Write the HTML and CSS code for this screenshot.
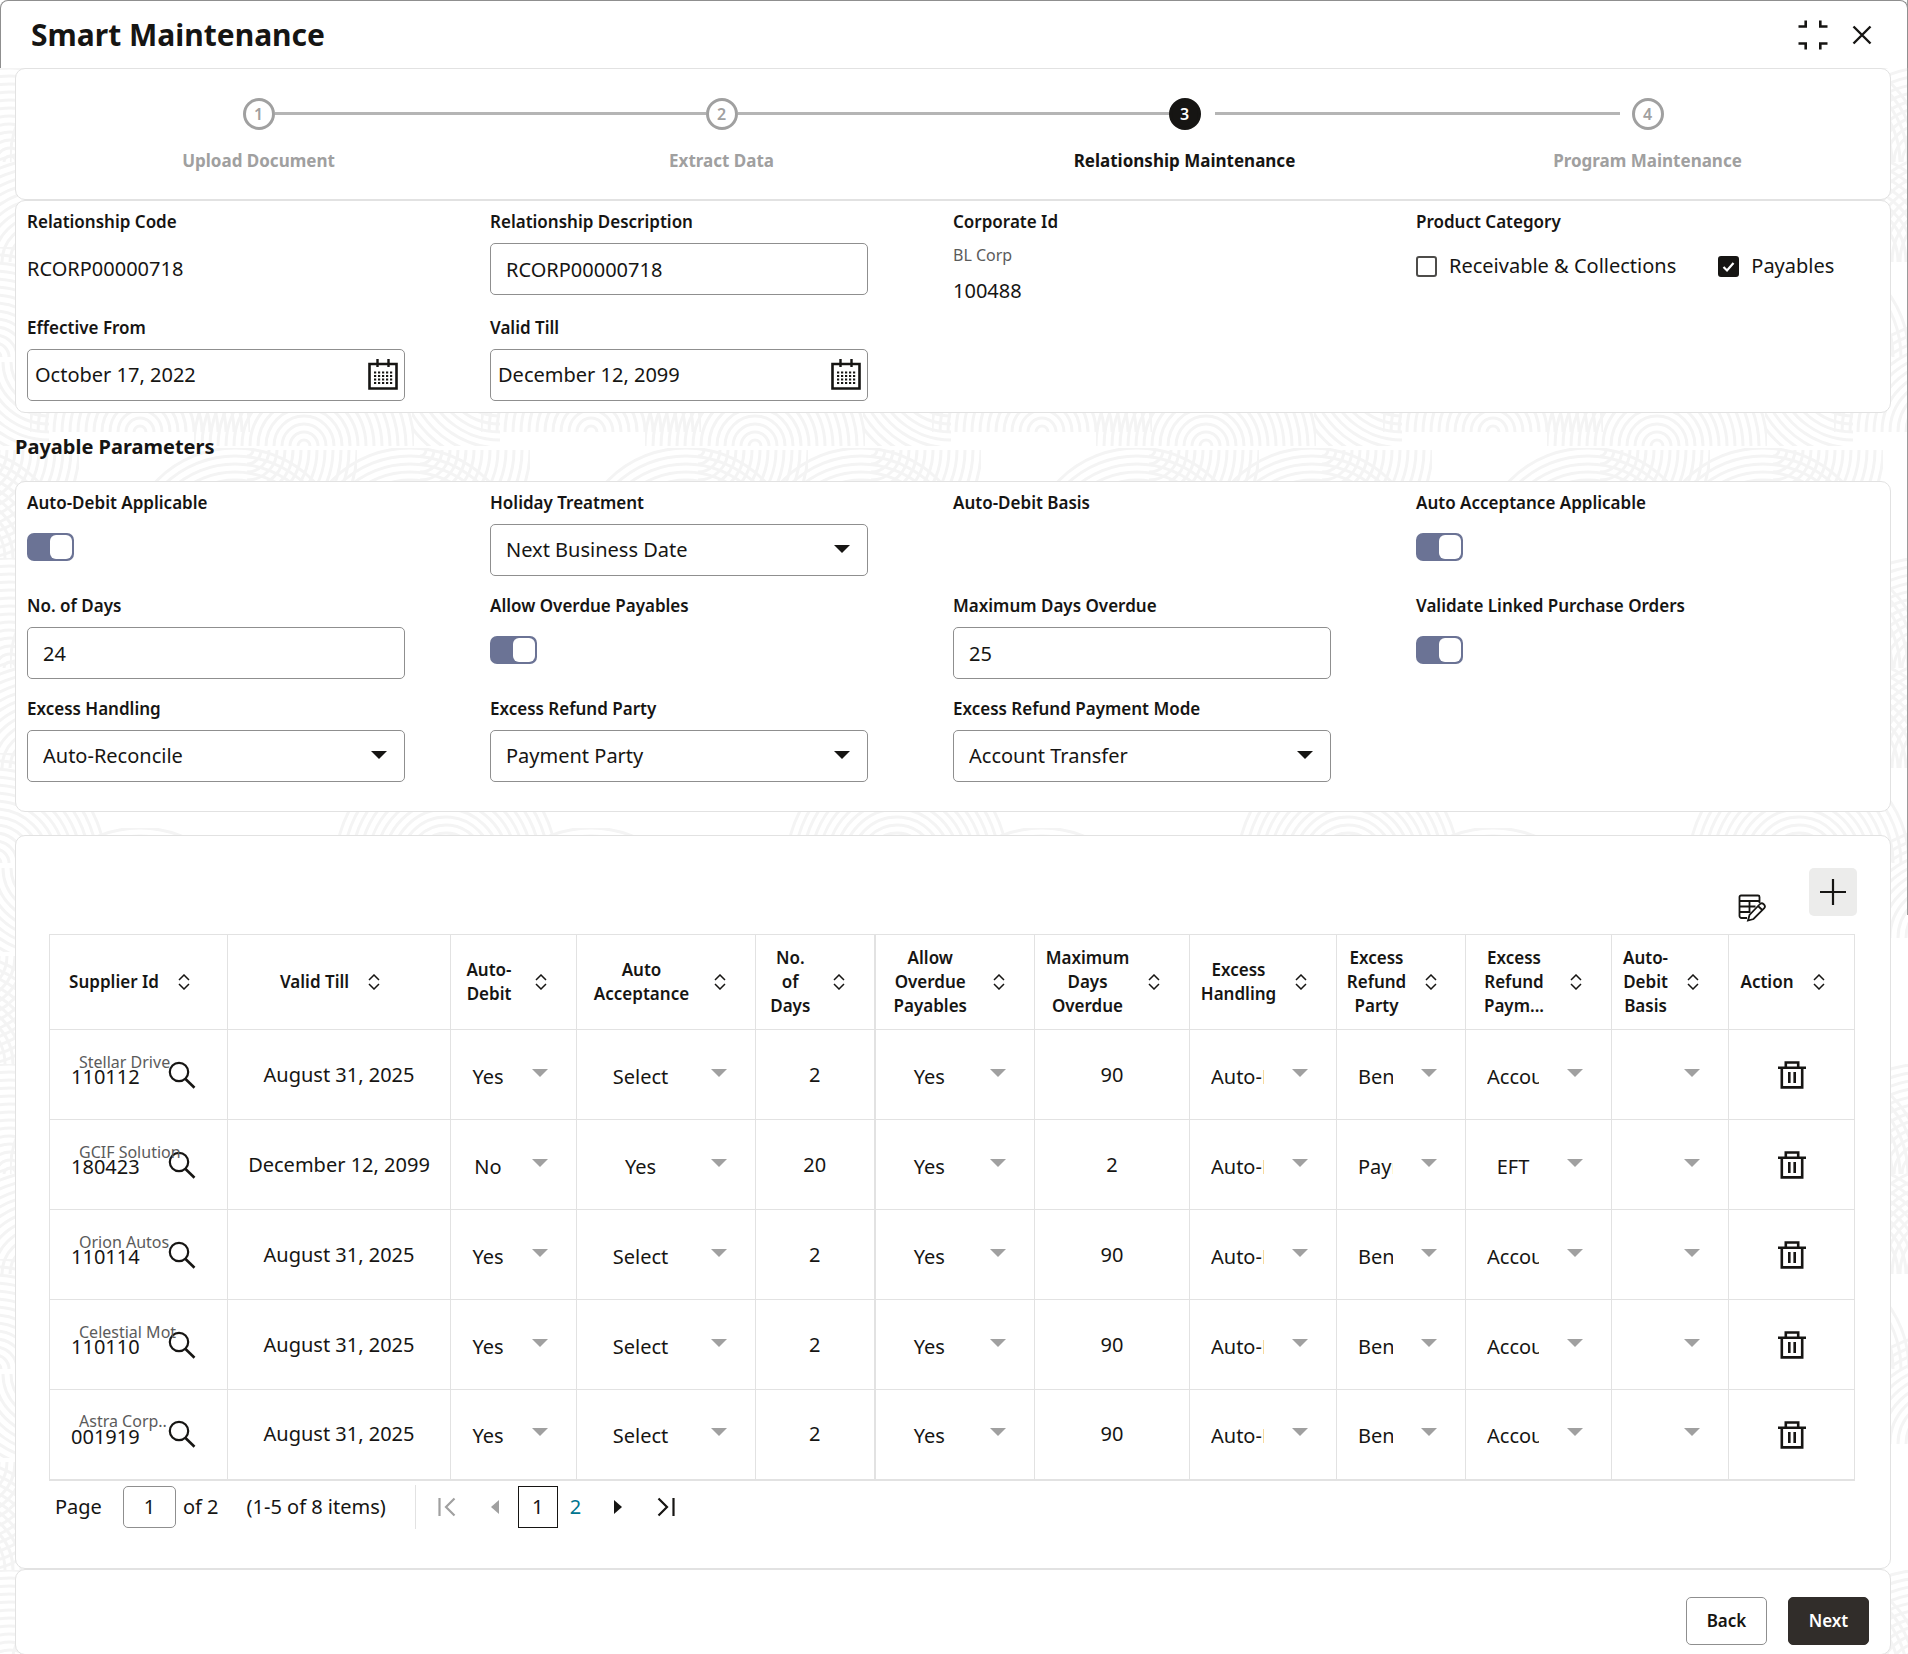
FILE: index.html
```html
<!DOCTYPE html>
<html lang="en">
<head>
<meta charset="utf-8">
<meta name="viewport" content="width=device-width, initial-scale=1">
<title>Smart Maintenance</title>
<link rel="stylesheet" href="styles.css">
</head>
<body>
<svg class="sprite" aria-hidden="true">
  <symbol id="i-sort" viewBox="0 0 12 16"><path d="M1 6l5-5 5 5M1 10l5 5 5-5" fill="none" stroke="currentColor" stroke-width="1.5"/></symbol>
  <symbol id="i-search" viewBox="0 0 28 28"><circle cx="11" cy="11" r="9.2" fill="none" stroke="currentColor" stroke-width="2.2"/><path d="M17.5 18l9 8.7" fill="none" stroke="currentColor" stroke-width="2.6"/></symbol>
  <symbol id="i-trash" viewBox="0 0 28 28"><path d="M0 6.8h28M7.8 6.500V1.500h12.400v5M3.800 7v19.400h20.400V7" fill="none" stroke="currentColor" stroke-width="2.6"/><path d="M11.300 11v11M16.700 11v11" stroke="currentColor" stroke-width="2.600"/></symbol>
  <symbol id="i-cal" viewBox="0 0 30 32"><path d="M1.500 5h27v24.500h-27z" fill="none" stroke="currentColor" stroke-width="2.600"/><path d="M9.500 0v8M20.500 0v8" stroke="currentColor" stroke-width="2.400"/><path d="M6 13.500h18.500M6 17h18.500M6 20.500h18.500M6 24h18.500" stroke="currentColor" stroke-width="2" stroke-dasharray="2.200 1.800"/></symbol>
</svg>

<div class="dialog">
  <header class="dialog-head">
    <h1 class="dialog-title">Smart Maintenance</h1>
    <div class="dialog-tools">
      <button class="icon-btn" type="button" aria-label="Collapse">
        <svg width="30" height="30" viewBox="0 0 30 30"><path d="M0.500 6.500h7.200V0.500M22.300 0.500v6h7.200M0.500 23.500h7.200v6M22.300 29.500v-6h7.200" fill="none" stroke="currentColor" stroke-width="2.600"/></svg>
      </button>
      <button class="icon-btn" type="button" aria-label="Close">
        <svg width="20" height="20" viewBox="0 0 20 20"><path d="M1.500 1.500l17 17M18.500 1.500l-17 17" fill="none" stroke="currentColor" stroke-width="2.400"/></svg>
      </button>
    </div>
  </header>

  <main class="content">
    <nav class="card" aria-label="Progress">
      <ol class="train">
        <li class="step joined"><span class="dot">1</span><span class="step-name">Upload Document</span></li>
        <li class="step joined"><span class="dot">2</span><span class="step-name">Extract Data</span></li>
        <li class="step current spaced" aria-current="step"><span class="dot">3</span><span class="step-name">Relationship Maintenance</span></li>
        <li class="step"><span class="dot">4</span><span class="step-name">Program Maintenance</span></li>
      </ol>
    </nav>

    <section class="card form general">
      <div class="field"><span class="label">Relationship Code</span><span class="value">RCORP00000718</span></div>
      <div class="field"><label class="label" for="desc">Relationship Description</label><input class="box" id="desc" type="text" value="RCORP00000718"></div>
      <div class="field"><span class="label">Corporate Id</span><span class="corp"><small>BL Corp</small><span>100488</span></span></div>
      <fieldset class="field"><legend class="label">Product Category</legend>
        <div class="checks">
          <label class="check"><input type="checkbox"><span>Receivable &amp; Collections</span></label>
          <label class="check"><input type="checkbox" checked><span>Payables</span></label>
        </div>
      </fieldset>
      <div class="field"><label class="label" for="from">Effective From</label>
        <div class="box date"><input id="from" type="text" value="October 17, 2022"><button class="icon-btn" type="button" aria-label="Pick effective date"><svg width="30" height="32"><use href="#i-cal"/></svg></button></div></div>
      <div class="field"><label class="label" for="till">Valid Till</label>
        <div class="box date"><input id="till" type="text" value="December 12, 2099"><button class="icon-btn" type="button" aria-label="Pick end date"><svg width="30" height="32"><use href="#i-cal"/></svg></button></div></div>
    </section>

    <h2 class="section-title">Payable Parameters</h2>

    <section class="card form payable">
      <div class="field"><label class="label" for="ad">Auto-Debit Applicable</label><input class="switch" id="ad" type="checkbox" role="switch" checked></div>
      <div class="field"><label class="label" for="ht">Holiday Treatment</label><select class="box" id="ht"><option>Next Business Date</option></select></div>
      <div class="field"><span class="label">Auto-Debit Basis</span></div>
      <div class="field"><label class="label" for="aa">Auto Acceptance Applicable</label><input class="switch" id="aa" type="checkbox" role="switch" checked></div>
      <div class="field"><label class="label" for="nd">No. of Days</label><input class="box" id="nd" type="text" value="24"></div>
      <div class="field"><label class="label" for="op">Allow Overdue Payables</label><input class="switch" id="op" type="checkbox" role="switch" checked></div>
      <div class="field"><label class="label" for="md">Maximum Days Overdue</label><input class="box" id="md" type="text" value="25"></div>
      <div class="field"><label class="label" for="vl">Validate Linked Purchase Orders</label><input class="switch" id="vl" type="checkbox" role="switch" checked></div>
      <div class="field"><label class="label" for="eh">Excess Handling</label><select class="box" id="eh"><option>Auto-Reconcile</option></select></div>
      <div class="field"><label class="label" for="rp">Excess Refund Party</label><select class="box" id="rp"><option>Payment Party</option></select></div>
      <div class="field"><label class="label" for="pm">Excess Refund Payment Mode</label><select class="box" id="pm"><option>Account Transfer</option></select></div>
    </section>

    <section class="card suppliers">
      <div class="toolbar">
        <button class="icon-btn edit-btn" type="button" aria-label="Edit table">
          <svg width="28" height="28" viewBox="0 0 28 28" fill="none" stroke="currentColor" stroke-width="1.800"><path d="M9 24H3.500a2 2 0 0 1-2-2V3a1.500 1.500 0 0 1 1.500-1.500h17A1.500 1.500 0 0 1 21.500 3v6M1.500 7h20M1.500 12.500h16M1.500 18h11M11.500 7v11"/><path d="M10 26.500l1.500-5.500L21.500 10.500a3 3 0 0 1 4.500 4L15.500 25zM20 12l4.300 4"/></svg>
        </button>
        <button class="add-btn" type="button" aria-label="Add supplier">
          <svg width="28" height="28" viewBox="0 0 28 28"><path d="M14 1v26M1 14h26" stroke="currentColor" stroke-width="2.200"/></svg>
        </button>
      </div>

      <table class="grid">
        <colgroup><col class="c178"><col class="c223"><col class="c126"><col class="c179"><col class="c119"><col class="c160"><col class="c155"><col class="c147"><col class="c129"><col class="c146"><col class="c117"><col class="c126"></colgroup>
        <thead>
          <tr>
            <th><div class="th"><span>Supplier Id</span><svg><use href="#i-sort"/></svg></div></th>
            <th><div class="th"><span>Valid Till</span><svg><use href="#i-sort"/></svg></div></th>
            <th><div class="th"><span>Auto-Debit</span><svg><use href="#i-sort"/></svg></div></th>
            <th><div class="th"><span>Auto Acceptance</span><svg><use href="#i-sort"/></svg></div></th>
            <th class="frozen"><div class="th"><span>No.<br>of<br>Days</span><svg><use href="#i-sort"/></svg></div></th>
            <th><div class="th"><span>Allow Overdue Payables</span><svg><use href="#i-sort"/></svg></div></th>
            <th><div class="th"><span>Maximum Days Overdue</span><svg><use href="#i-sort"/></svg></div></th>
            <th><div class="th"><span>Excess Handling</span><svg><use href="#i-sort"/></svg></div></th>
            <th><div class="th"><span>Excess Refund Party</span><svg><use href="#i-sort"/></svg></div></th>
            <th><div class="th"><span>Excess Refund Paym...</span><svg><use href="#i-sort"/></svg></div></th>
            <th><div class="th"><span>Auto-Debit Basis</span><svg><use href="#i-sort"/></svg></div></th>
            <th><div class="th"><span>Action</span><svg><use href="#i-sort"/></svg></div></th>
          </tr>
        </thead>
        <tbody>
          <tr>
            <td><div class="lookup"><span class="party">Stellar Drive</span><input type="text" aria-label="Supplier Id" value="110112"><button class="icon-btn" type="button" aria-label="Search"><svg width="28" height="28"><use href="#i-search"/></svg></button></div></td>
            <td>August 31, 2025</td>
            <td><select class="pick" aria-label="Auto-Debit"><option>Yes</option></select></td>
            <td><select class="pick" aria-label="Auto Acceptance"><option>Select</option></select></td>
            <td class="frozen">2</td>
            <td><select class="pick" aria-label="Allow Overdue Payables"><option>Yes</option></select></td>
            <td>90</td>
            <td><select class="pick" aria-label="Excess Handling"><option>Auto-Reconcile</option></select></td>
            <td><select class="pick" aria-label="Excess Refund Party"><option>Beneficiary</option></select></td>
            <td><select class="pick" aria-label="Excess Refund Payment Mode"><option>Account Transfer</option></select></td>
            <td><select class="pick" aria-label="Auto-Debit Basis"><option></option></select></td>
            <td><button class="icon-btn" type="button" aria-label="Delete"><svg width="28" height="28"><use href="#i-trash"/></svg></button></td>
          </tr>
          <tr>
            <td><div class="lookup"><span class="party">GCIF Solution</span><input type="text" aria-label="Supplier Id" value="180423"><button class="icon-btn" type="button" aria-label="Search"><svg width="28" height="28"><use href="#i-search"/></svg></button></div></td>
            <td>December 12, 2099</td>
            <td><select class="pick" aria-label="Auto-Debit"><option>No</option></select></td>
            <td><select class="pick" aria-label="Auto Acceptance"><option>Yes</option></select></td>
            <td class="frozen">20</td>
            <td><select class="pick" aria-label="Allow Overdue Payables"><option>Yes</option></select></td>
            <td>2</td>
            <td><select class="pick" aria-label="Excess Handling"><option>Auto-Reconcile</option></select></td>
            <td><select class="pick" aria-label="Excess Refund Party"><option>Payment Party</option></select></td>
            <td><select class="pick" aria-label="Excess Refund Payment Mode"><option>EFT</option></select></td>
            <td><select class="pick" aria-label="Auto-Debit Basis"><option></option></select></td>
            <td><button class="icon-btn" type="button" aria-label="Delete"><svg width="28" height="28"><use href="#i-trash"/></svg></button></td>
          </tr>
          <tr>
            <td><div class="lookup"><span class="party">Orion Autos</span><input type="text" aria-label="Supplier Id" value="110114"><button class="icon-btn" type="button" aria-label="Search"><svg width="28" height="28"><use href="#i-search"/></svg></button></div></td>
            <td>August 31, 2025</td>
            <td><select class="pick" aria-label="Auto-Debit"><option>Yes</option></select></td>
            <td><select class="pick" aria-label="Auto Acceptance"><option>Select</option></select></td>
            <td class="frozen">2</td>
            <td><select class="pick" aria-label="Allow Overdue Payables"><option>Yes</option></select></td>
            <td>90</td>
            <td><select class="pick" aria-label="Excess Handling"><option>Auto-Reconcile</option></select></td>
            <td><select class="pick" aria-label="Excess Refund Party"><option>Beneficiary</option></select></td>
            <td><select class="pick" aria-label="Excess Refund Payment Mode"><option>Account Transfer</option></select></td>
            <td><select class="pick" aria-label="Auto-Debit Basis"><option></option></select></td>
            <td><button class="icon-btn" type="button" aria-label="Delete"><svg width="28" height="28"><use href="#i-trash"/></svg></button></td>
          </tr>
          <tr>
            <td><div class="lookup"><span class="party">Celestial Mot</span><input type="text" aria-label="Supplier Id" value="110110"><button class="icon-btn" type="button" aria-label="Search"><svg width="28" height="28"><use href="#i-search"/></svg></button></div></td>
            <td>August 31, 2025</td>
            <td><select class="pick" aria-label="Auto-Debit"><option>Yes</option></select></td>
            <td><select class="pick" aria-label="Auto Acceptance"><option>Select</option></select></td>
            <td class="frozen">2</td>
            <td><select class="pick" aria-label="Allow Overdue Payables"><option>Yes</option></select></td>
            <td>90</td>
            <td><select class="pick" aria-label="Excess Handling"><option>Auto-Reconcile</option></select></td>
            <td><select class="pick" aria-label="Excess Refund Party"><option>Beneficiary</option></select></td>
            <td><select class="pick" aria-label="Excess Refund Payment Mode"><option>Account Transfer</option></select></td>
            <td><select class="pick" aria-label="Auto-Debit Basis"><option></option></select></td>
            <td><button class="icon-btn" type="button" aria-label="Delete"><svg width="28" height="28"><use href="#i-trash"/></svg></button></td>
          </tr>
          <tr>
            <td><div class="lookup"><span class="party">Astra Corp..</span><input type="text" aria-label="Supplier Id" value="001919"><button class="icon-btn" type="button" aria-label="Search"><svg width="28" height="28"><use href="#i-search"/></svg></button></div></td>
            <td>August 31, 2025</td>
            <td><select class="pick" aria-label="Auto-Debit"><option>Yes</option></select></td>
            <td><select class="pick" aria-label="Auto Acceptance"><option>Select</option></select></td>
            <td class="frozen">2</td>
            <td><select class="pick" aria-label="Allow Overdue Payables"><option>Yes</option></select></td>
            <td>90</td>
            <td><select class="pick" aria-label="Excess Handling"><option>Auto-Reconcile</option></select></td>
            <td><select class="pick" aria-label="Excess Refund Party"><option>Beneficiary</option></select></td>
            <td><select class="pick" aria-label="Excess Refund Payment Mode"><option>Account Transfer</option></select></td>
            <td><select class="pick" aria-label="Auto-Debit Basis"><option></option></select></td>
            <td><button class="icon-btn" type="button" aria-label="Delete"><svg width="28" height="28"><use href="#i-trash"/></svg></button></td>
          </tr>
        </tbody>
      </table>

      <div class="pager">
        <label class="pager-label" for="page">Page</label>
        <input class="page-input" id="page" type="text" value="1">
        <span class="page-total">of 2</span>
        <span class="page-range">(1-5 of 8 items)</span>
        <div class="page-nav">
          <div class="page-step">
            <button class="icon-btn" type="button" disabled aria-label="First page"><svg width="18" height="20" viewBox="0 0 18 20"><path d="M1.500 1v18M16.500 1.500L8 10l8.500 8.500" fill="none" stroke="currentColor" stroke-width="2.200"/></svg></button>
            <button class="icon-btn" type="button" disabled aria-label="Previous page"><svg width="18" height="20" viewBox="0 0 18 20"><path d="M13 3v14L5 10z" fill="currentColor"/></svg></button>
          </div>
          <div class="page-list">
            <span class="page-now" aria-current="page">1</span>
            <a class="page-link" href="#">2</a>
          </div>
          <div class="page-step">
            <button class="icon-btn" type="button" aria-label="Next page"><svg width="18" height="20" viewBox="0 0 18 20"><path d="M5 3v14l8-7z" fill="currentColor"/></svg></button>
            <button class="icon-btn" type="button" aria-label="Last page"><svg width="18" height="20" viewBox="0 0 18 20"><path d="M16.500 1v18M1.500 1.500L10 10l-8.500 8.500" fill="none" stroke="currentColor" stroke-width="2.200"/></svg></button>
          </div>
        </div>
      </div>
    </section>

    <footer class="card actions">
      <button class="btn" type="button">Back</button>
      <button class="btn primary" type="button">Next</button>
    </footer>
  </main>
</div>
</body>
</html>
```
FILE: styles.css
```css
:root {
  --ink: #161513;
  --line: #e2e2e2;
  --edge: #8f8f8f;
  --muted: #a0a0a0;
  --accent: #6b7395;
}

* { box-sizing: border-box; }

body {
  margin: 0;
  background: #fff;
  color: var(--ink);
  font: 400 20px/28px "Noto Sans", "Open Sans", sans-serif;
}

.sprite { display: none; }

svg { display: block; flex: none; }

input, select, button { font: inherit; color: inherit; }

.icon-btn {
  display: inline-flex;
  align-items: center;
  justify-content: center;
  padding: 0;
  border: 0;
  background: none;
}

.icon-btn:disabled { color: var(--muted); }

/* Dialog shell */
.dialog {
  min-height: 100vh;
  background:
    linear-gradient(#9a9a9a, #9a9a9a) right top / 1px 915px no-repeat,
    url("data:image/svg+xml,%3Csvg xmlns='http://www.w3.org/2000/svg' width='451' height='506'%3E%3Cdefs%3E%3Cg id='r' fill='none' stroke='%23f4f4f4' stroke-width='3'%3E%3Ccircle r='6'/%3E%3Ccircle r='14'/%3E%3Ccircle r='22'/%3E%3Ccircle r='30'/%3E%3Ccircle r='38'/%3E%3Ccircle r='46'/%3E%3Ccircle r='54'/%3E%3Ccircle r='62'/%3E%3Ccircle r='70'/%3E%3Ccircle r='78'/%3E%3Ccircle r='86'/%3E%3Ccircle r='94'/%3E%3Ccircle r='102'/%3E%3Ccircle r='110'/%3E%3C/g%3E%3CclipPath id='u'%3E%3Cpath d='M-110-110H110V0H-110z'/%3E%3C/clipPath%3E%3CclipPath id='q'%3E%3Cpath d='M0 0H110V110H0z'/%3E%3C/clipPath%3E%3CclipPath id='p'%3E%3Cpath d='M-88 0H0V84H-88z'/%3E%3C/clipPath%3E%3Cg id='a' clip-path='url(%23u)'%3E%3Cuse href='%23r'/%3E%3C/g%3E%3Cg id='b' clip-path='url(%23q)'%3E%3Cuse href='%23r'/%3E%3C/g%3E%3Cg id='c' clip-path='url(%23p)'%3E%3Cuse href='%23r'/%3E%3C/g%3E%3C/defs%3E%3Cuse href='%23a' x='304' y='504'/%3E%3Cuse href='%23a' x='140' y='490'/%3E%3Cuse href='%23c' x='500' y='420'/%3E%3Cuse href='%23c' x='49' y='420'/%3E%3Cuse href='%23b' x='247' y='2'/%3E%3Cuse href='%23b' x='420' y='2'/%3E%3Cuse href='%23b' x='-31' y='2'/%3E%3Cuse href='%23a' x='235' y='110'/%3E%3Cuse href='%23a' x='410' y='110'/%3E%3Cuse href='%23a' x='-41' y='110'/%3E%3Cuse href='%23a' x='10' y='220'/%3E%3Cuse href='%23a' x='461' y='220'/%3E%3Cuse href='%23a' x='120' y='220'/%3E%3Cuse href='%23a' x='225' y='220'/%3E%3Cuse href='%23a' x='330' y='220'/%3E%3Cuse href='%23a' x='40' y='320'/%3E%3Cuse href='%23a' x='150' y='320'/%3E%3Cuse href='%23a' x='260' y='320'/%3E%3Cuse href='%23a' x='365' y='320'/%3E%3Cuse href='%23a' x='-5' y='415'/%3E%3Cuse href='%23a' x='446' y='415'/%3E%3C/svg%3E") 0 448px,
    #fff;
}

.dialog-head {
  display: flex;
  align-items: center;
  justify-content: space-between;
  height: 68px;
  padding: 0 35px 0 30px;
  border: 1px solid var(--edge);
  border-bottom: 0;
  border-radius: 8px 8px 0 0;
  background: #fff;
}

.dialog-title {
  margin: 0;
  font-size: 30px;
  font-weight: 700;
  line-height: 40px;
}

.dialog-tools { display: flex; align-items: center; gap: 24px; }

.content { padding: 0 17px 0 15px; }

.card {
  border: 1px solid var(--line);
  border-radius: 10px;
  background: #fff;
}

/* Progress train */
.train {
  display: grid;
  grid-template-columns: repeat(4, 1fr);
  margin: 0;
  padding: 29px 11px 26px;
  list-style: none;
}

.step {
  position: relative;
  display: flex;
  flex-direction: column;
  align-items: center;
  gap: 19px;
  color: var(--muted);
  font-size: 17px;
  font-weight: 700;
  line-height: 24px;
}

.dot {
  display: flex;
  align-items: center;
  justify-content: center;
  width: 32px;
  height: 32px;
  border: 3px solid var(--muted);
  border-radius: 50%;
  font-size: 16px;
  font-weight: 600;
}

.joined::after,
.spaced::after {
  content: "";
  position: absolute;
  top: 14px;
  left: calc(50% + 16px);
  width: calc(100% - 32px);
  height: 3px;
  background: #b5b5b5;
}

.spaced::after {
  left: calc(50% + 30px);
  width: calc(100% - 58px);
}

.current { color: var(--ink); }

.current .dot {
  border-color: var(--ink);
  background: var(--ink);
  color: #fff;
}

/* Forms */
.form {
  display: grid;
  grid-template-columns: repeat(4, 1fr);
  padding: 9px 11px 11px;
}

.general { row-gap: 11px; }

.payable { row-gap: 18px; padding-bottom: 29px; }

.field {
  display: flex;
  flex-direction: column;
  align-items: flex-start;
  gap: 9px;
  min-width: 0;
  margin: 0;
  padding: 0 85px 0 0;
  border: 0;
}

fieldset.field { display: block; padding-right: 0; }

.label {
  padding: 0;
  font-size: 17px;
  font-weight: 600;
  line-height: 24px;
}

.value { line-height: 52px; }

.box {
  width: 100%;
  height: 52px;
  padding: 0 15px;
  border: 1px solid var(--edge);
  border-radius: 5px;
  background: #fff;
}

select.box {
  appearance: none;
  padding-right: 48px;
  background: #fff url("data:image/svg+xml,%3Csvg xmlns='http://www.w3.org/2000/svg' width='16' height='8'%3E%3Cpath d='M0 0h16L8 8z' fill='%23161513'/%3E%3C/svg%3E") right 17px top 20px no-repeat;
}

.date {
  display: flex;
  align-items: center;
  padding: 0 6px 0 7px;
}

.date input {
  flex: 1;
  min-width: 0;
  padding: 0;
  border: 0;
  background: none;
}

.corp { display: flex; flex-direction: column; gap: 10px; }

.corp small { color: #5b5b5b; font-size: 16px; line-height: 24px; }

.checks {
  display: flex;
  flex-wrap: wrap;
  gap: 42px;
  padding-top: 18px;
}

.check { display: flex; align-items: center; gap: 12px; }

.check input {
  appearance: none;
  width: 21px;
  height: 21px;
  margin: 0;
  border: 2px solid #4d4c4a;
  border-radius: 3px;
}

.check input:checked {
  border-color: var(--ink);
  background: var(--ink) url("data:image/svg+xml,%3Csvg xmlns='http://www.w3.org/2000/svg' width='17' height='17'%3E%3Cpath d='M3.500 9l3.500 3.500L13.500 5' fill='none' stroke='white' stroke-width='2.200'/%3E%3C/svg%3E") center no-repeat;
}

.switch {
  appearance: none;
  display: flex;
  justify-content: flex-end;
  width: 47px;
  height: 28px;
  margin: 9px 0 0;
  padding: 2px;
  border-radius: 7px;
  background: var(--accent);
}

.switch::before {
  content: "";
  width: 22px;
  height: 24px;
  border-radius: 6px;
  background: #fff;
}

.section-title {
  margin: 0;
  padding: 20px 0;
  font-size: 20px;
  font-weight: 700;
  line-height: 28px;
}

/* Supplier table */
.suppliers { margin-top: 23px; padding: 32px 36px 39px 33px; }

.toolbar {
  display: flex;
  align-items: flex-end;
  justify-content: flex-end;
  gap: 43px;
  margin: 0 -3px 18px 0;
}

.edit-btn { height: 42px; align-items: flex-end; margin-bottom: -6px; }

.add-btn {
  display: flex;
  align-items: center;
  justify-content: center;
  width: 48px;
  height: 48px;
  padding: 0;
  border: 0;
  border-radius: 5px;
  background: #ececeb;
}

.grid {
  width: 100%;
  table-layout: fixed;
  border-collapse: collapse;
  border-bottom: 2px solid var(--line);
}

.c117 { width: 117px; }
.c119 { width: 119px; }
.c126 { width: 126px; }
.c129 { width: 129px; }
.c146 { width: 146px; }
.c147 { width: 147px; }
.c155 { width: 155px; }
.c160 { width: 160px; }
.c178 { width: 178px; }
.c179 { width: 179px; }
.c223 { width: 223px; }

.grid th,
.grid td {
  padding: 0;
  border: 1px solid var(--line);
  text-align: center;
  vertical-align: middle;
}

.grid .frozen { border-right-width: 2px; }

.grid th {
  height: 95px;
  font-size: 17px;
  font-weight: 600;
  line-height: 24px;
}

.grid td { height: 90px; }

.th {
  display: flex;
  align-items: center;
  justify-content: center;
  gap: 19px;
  padding: 0 29px 0 11px;
}

.frozen .th { gap: 23px; padding-right: 25px; }

.th svg { width: 12px; height: 16px; }

.grid .icon-btn { vertical-align: middle; }

.pick {
  appearance: none;
  display: block;
  width: calc(100% - 49px);
  height: 44px;
  margin: 4px 28px 0 21px;
  padding: 0 44px 0 0;
  border: 0;
  text-align: center;
  background: url("data:image/svg+xml,%3Csvg xmlns='http://www.w3.org/2000/svg' width='16' height='8'%3E%3Cpath d='M0 0h16L8 8z' fill='%23a0a0a0'/%3E%3C/svg%3E") right 14px no-repeat;
}

.lookup {
  position: relative;
  display: flex;
  align-items: center;
  padding: 0 31px 0 21px;
}

.lookup input {
  flex: 1;
  min-width: 0;
  height: 30px;
  padding: 4px 0 0;
  border: 0;
  background: none;
}

/* Party name floats over the top of the id */
.party {
  position: absolute;
  top: -10px;
  left: 29px;
  color: #5b5b5b;
  font-size: 16px;
  line-height: 24px;
  white-space: nowrap;
}

/* Pager */
.pager {
  display: flex;
  align-items: center;
  padding: 4px 6px 0;
}

.page-input {
  width: 53px;
  height: 42px;
  margin: 0 7px 0 21px;
  padding: 0;
  border: 1px solid var(--edge);
  border-radius: 5px;
  text-align: center;
}

.page-range { margin-left: 28px; }

.page-nav {
  display: flex;
  align-items: center;
  gap: 14px;
  height: 44px;
  margin-left: 29px;
  padding-left: 22px;
  border-left: 1px solid var(--line);
}

.page-step { display: flex; gap: 30px; }

.page-step .icon-btn { width: 18px; }

.page-list {
  display: flex;
  align-items: center;
  gap: 12px;
  padding-right: 14px;
}

.page-now {
  width: 40px;
  height: 42px;
  border: 1px solid var(--ink);
  line-height: 40px;
  text-align: center;
}

.page-link { color: #00758f; text-decoration: none; }

/* Footer */
.actions {
  display: flex;
  justify-content: flex-end;
  gap: 21px;
  padding: 27px 21px 9px;
}

.btn {
  width: 81px;
  height: 48px;
  padding: 0;
  border: 1px solid var(--edge);
  border-radius: 5px;
  background: #fff;
  font-size: 17px;
  font-weight: 600;
}

.btn.primary {
  border-color: #312d2a;
  background: #312d2a;
  color: #fff;
}
```
